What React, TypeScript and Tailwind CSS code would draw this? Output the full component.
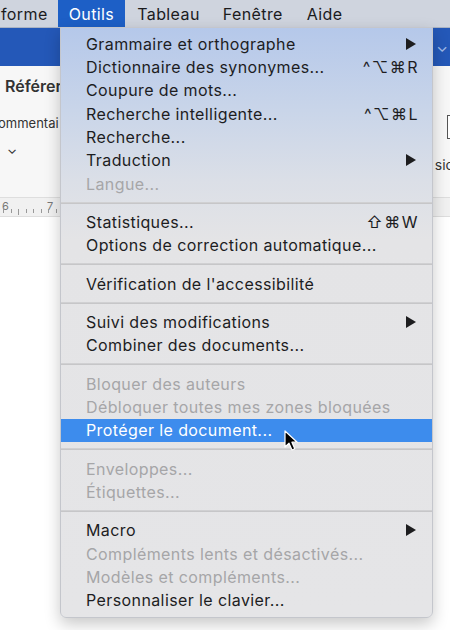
import React from 'react';

type Item = {
  label: string;
  shortcut?: string;
  submenu?: boolean;
  disabled?: boolean;
  active?: boolean;
};

const groups: Item[][] = [
  [
    { label: 'Grammaire et orthographe', submenu: true },
    { label: 'Dictionnaire des synonymes...', shortcut: '^⌥⌘R' },
    { label: 'Coupure de mots...' },
    { label: 'Recherche intelligente...', shortcut: '^⌥⌘L' },
    { label: 'Recherche...' },
    { label: 'Traduction', submenu: true },
    { label: 'Langue...', disabled: true },
  ],
  [
    { label: 'Statistiques...', shortcut: '⇧⌘W' },
    { label: 'Options de correction automatique...' },
  ],
  [{ label: "Vérification de l'accessibilité" }],
  [
    { label: 'Suivi des modifications', submenu: true },
    { label: 'Combiner des documents...' },
  ],
  [
    { label: 'Bloquer des auteurs', disabled: true },
    { label: 'Débloquer toutes mes zones bloquées', disabled: true },
    { label: 'Protéger le document...', active: true },
  ],
  [
    { label: 'Enveloppes...', disabled: true },
    { label: 'Étiquettes...', disabled: true },
  ],
  [
    { label: 'Macro', submenu: true },
    { label: 'Compléments lents et désactivés...', disabled: true },
    { label: 'Modèles et compléments...', disabled: true },
    { label: 'Personnaliser le clavier...' },
  ],
];

function MenuRow({ item }: { item: Item }) {
  const color = item.active ? 'text-white' : item.disabled ? 'text-[#a6a6a8]' : 'text-[#1d1d1f]';
  return (
    <div
      className={`relative h-[23.33px] flex items-center justify-between pl-[25px] pr-[13px] ${
        item.active ? 'bg-[#3d8ced]' : ''
      } ${color}`}
    >
      <span className="tracking-[0.4px]">{item.label}</span>
      {item.shortcut ? <span className="tracking-[1.5px]">{item.shortcut}</span> : null}
      {item.submenu ? (
        <svg width="12" height="12" viewBox="0 0 12 12" className="mr-[2px]">
          <path d="M1 0 L11 6 L1 12 Z" fill="#1d1d1f" />
        </svg>
      ) : null}
      {item.active ? (
        <svg width="16" height="22" viewBox="0 0 16 22" className="absolute left-[223px] top-[11px]">
          <path
            d="M1 1 L1 17 L5 13.2 L8 20 L10.8 18.8 L7.9 12.2 L13.2 12.2 Z"
            fill="#000"
            stroke="#fff"
            strokeWidth="1.2"
            strokeLinejoin="round"
          />
        </svg>
      ) : null}
    </div>
  );
}

export default function App() {
  return (
    <div
      className="relative w-[450px] h-[630px] overflow-hidden bg-white text-[16px]"
      style={{ fontFamily: 'Inter, "Noto Sans", sans-serif' }}
    >
      {/* menu bar */}
      <div className="h-[28px] flex items-center bg-[#cfd4de] border-b border-[#aab3c3] text-[#1b1b1d] tracking-[0.4px]">
        <span className="pl-[1px] pr-[10px]">forme</span>
        <span className="h-full flex items-center px-[11px] bg-[#1d5fc6] text-white">Outils</span>
        <span className="pl-[12px] pr-[11px]">Tableau</span>
        <span className="px-[12px]">Fenêtre</span>
        <span className="px-[12px]">Aide</span>
      </div>

      {/* blue ribbon tabs */}
      <div className="h-[38px] bg-[#2458b8] flex justify-end items-start pt-[8px] pr-[2px] text-[#9fbbe8] text-[15px]">
        <span>e ⌄</span>
      </div>

      {/* ribbon content */}
      <div className="h-[131px] bg-[#f7f7f7] flex justify-between">
        <div className="flex flex-col text-[#333]">
          <span className="pl-[5px] pt-[8px] text-[16px] font-semibold">Référer</span>
          <span className="pt-[16px] text-[13px] -ml-[2px]">ommentai</span>
          <span className="pl-[7px] pt-[6px] text-[13px]">⌄</span>
        </div>
        <div className="flex flex-col items-end">
          <div className="mt-[49px] w-[3px] h-[24px] border border-r-0 border-[#555] bg-white" />
          <span className="pt-[15px] text-[14px] text-[#333] -mr-[4px]">sio</span>
        </div>
      </div>

      {/* ruler */}
      <div className="h-[20px] bg-[#f1f1f1] border-y border-[#dedede] relative">
        <span className="absolute left-[2px] top-[0px] text-[11px] text-[#777]">6</span>
        <span className="absolute left-[47px] top-[0px] text-[11px] text-[#777]">7</span>
        <div className="absolute left-[0px] top-[11px] w-[60px] flex justify-between px-[3px]">
          {[0, 1, 2, 3, 4, 5, 6, 7].map((i) => (
            <div key={i} className={`w-px bg-[#999] ${i === 2 ? 'h-[6px]' : 'h-[4px]'}`} />
          ))}
        </div>
      </div>

      {/* dropdown menu */}
      <div className="absolute left-[60px] top-[27px] w-[373px] pt-[4px] pb-[5px] border border-[#c4c6cc] rounded-b-[6px] shadow-[0_6px_16px_rgba(0,0,0,0.22)] bg-[linear-gradient(180deg,#b5c8ea_0%,#c9d5e9_14%,#dbdfe7_26%,#e4e4e6_36%,#e5e5e7_100%)]">
        {groups.map((group, gi) => (
          <React.Fragment key={gi}>
            {gi > 0 ? (
              <div className="h-[15px] flex items-center">
                <div className="w-full h-[2px] bg-[#d0d0d2] border-b border-[#c6c6c8]" />
              </div>
            ) : null}
            {group.map((item) => (
              <MenuRow key={item.label} item={item} />
            ))}
          </React.Fragment>
        ))}
      </div>
    </div>
  );
}
